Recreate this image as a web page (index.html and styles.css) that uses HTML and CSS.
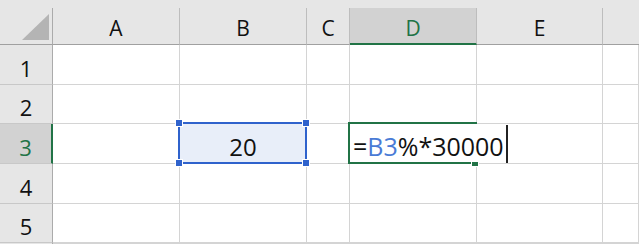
FILE: index.html
```html
<!DOCTYPE html>
<html lang="en">
<head>
  <meta charset="UTF-8" />
  <title>Sheet</title>
  <link rel="stylesheet" href="styles.css">
</head>
<body>
  <div class="sheet">
    <div class="topstrip"></div>
    <div class="grid">
      <div class="corner"><span class="tri"></span></div>
      <div class="colhead">A</div>
      <div class="colhead">B</div>
      <div class="colhead">C</div>
      <div class="colhead current">D</div>
      <div class="colhead">E</div>
      <div class="colhead last"></div>

      <div class="rowhead">1</div>
      <div class="cell"></div><div class="cell"></div><div class="cell"></div><div class="cell"></div><div class="cell"></div><div class="cell"></div>

      <div class="rowhead">2</div>
      <div class="cell"></div><div class="cell"></div><div class="cell"></div><div class="cell"></div><div class="cell"></div><div class="cell"></div>

      <div class="rowhead current">3</div>
      <div class="cell"></div>
      <div class="cell selected">
        <span class="value">20</span>
        <div class="selbox">
          <span class="handle tl"></span><span class="handle tr"></span>
          <span class="handle bl"></span><span class="handle br"></span>
        </div>
      </div>
      <div class="cell"></div>
      <div class="cell editing">
        <div class="editbox"><span class="fill"></span></div>
        <div class="editor">=<span class="ref">B3</span>%*30000<span class="caret"></span></div>
      </div>
      <div class="cell"></div><div class="cell"></div>

      <div class="rowhead">4</div>
      <div class="cell"></div><div class="cell"></div><div class="cell"></div><div class="cell"></div><div class="cell"></div><div class="cell"></div>

      <div class="rowhead">5</div>
      <div class="cell"></div><div class="cell"></div><div class="cell"></div><div class="cell"></div><div class="cell"></div><div class="cell"></div>

      <div class="rowhead"></div>
      <div class="cell"></div><div class="cell"></div><div class="cell"></div><div class="cell"></div><div class="cell"></div><div class="cell"></div>
    </div>
  </div>
</body>
</html>
```

FILE: styles.css
```css
* {
  box-sizing: border-box;
}

body {
  margin: 0;
  width: 639px;
  height: 244px;
  overflow: hidden;
  background: #fff;
  font-family: 'Open Sans', 'Noto Sans', sans-serif;
  color: #111;
}

.topstrip {
  height: 8px;
  background: #e6e6e6;
}

.grid {
  display: grid;
  grid-template-columns: 53px 127px 127px 43px 127px 126px 1fr;
  grid-template-rows: 37px 40px 39px 40px 40px 39px 1px;
}

.corner {
  position: relative;
  background: #e6e6e6;
  border-right: 1px solid #ababab;
  border-bottom: 1px solid #a0a0a0;
}

.tri {
  position: absolute;
  left: 22px;
  top: 6px;
  width: 27px;
  height: 26px;
  background: #b4b4b4;
  clip-path: polygon(100% 0, 100% 100%, 0 100%);
}

.colhead {
  display: flex;
  align-items: center;
  justify-content: center;
  padding-top: 4px;
  font-size: 21px;
  background: #e6e6e6;
  border-right: 1px solid #bdbdbd;
  border-bottom: 1px solid #a0a0a0;
}

.colhead.last {
  border-right: none;
}

.colhead.current {
  background: #d2d2d2;
  color: #217346;
  border-bottom: 2px solid #217346;
}

.rowhead {
  display: flex;
  align-items: center;
  justify-content: center;
  padding-top: 6px;
  font-size: 22px;
  background: #e6e6e6;
  border-right: 1px solid #ababab;
  border-bottom: 1px solid #c8c8c8;
}

.rowhead.current {
  background: #d2d2d2;
  color: #217346;
  border-right: 2px solid #217346;
}

.cell {
  border-right: 1px solid #d4d4d4;
  border-bottom: 1px solid #d4d4d4;
}

.selected {
  position: relative;
  display: flex;
  align-items: center;
  justify-content: center;
  padding-top: 6px;
  font-size: 24px;
  background: #e8eef9;
}

.selbox {
  position: absolute;
  left: -2px;
  top: -2px;
  right: -1px;
  bottom: -1px;
  border: 2px solid #2f62cc;
}

.handle {
  position: absolute;
  width: 8px;
  height: 8px;
  background: #2f62cc;
  border: 1px solid #fff;
}

.handle.tl { left: -5px; top: -5px; }
.handle.tr { right: -5px; top: -5px; }
.handle.bl { left: -5px; bottom: -5px; }
.handle.br { right: -5px; bottom: -5px; }

.editing {
  position: relative;
  z-index: 2;
}

.editbox {
  position: absolute;
  left: -2px;
  top: -2px;
  right: -1px;
  bottom: -1px;
  border: 2px solid #217346;
}

.fill {
  position: absolute;
  right: -4px;
  bottom: -5px;
  width: 8px;
  height: 8px;
  background: #217346;
  border: 1px solid #fff;
}

.editor {
  position: absolute;
  left: 0;
  top: 0;
  height: 38px;
  display: flex;
  align-items: center;
  padding: 6px 0 0 3px;
  background: #fff;
  font-size: 25px;
  white-space: nowrap;
}

.ref {
  color: #4a7bd6;
}

.caret {
  align-self: flex-start;
  width: 2px;
  height: 38px;
  margin: -5px 0 0 2px;
  background: #222;
}
```
